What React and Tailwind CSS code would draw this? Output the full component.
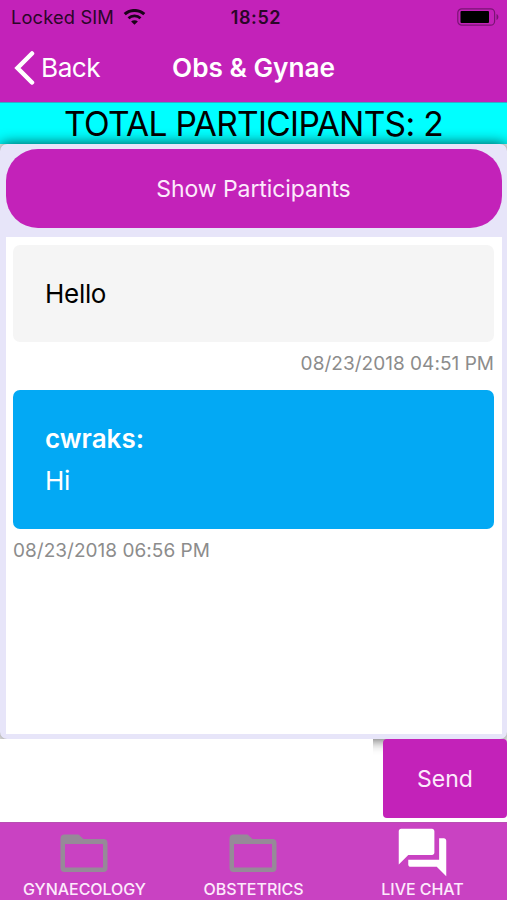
import { MdForum } from 'react-icons/md';

const messages = [
  { id: 1, text: 'Hello', time: '08/23/2018 04:51 PM', mine: true },
  { id: 2, author: 'cwraks', text: 'Hi', time: '08/23/2018 06:56 PM', mine: false },
];

const FolderIcon = () => (
  <svg width="48" height="39" viewBox="0 0 48 39" fill="none" className="mt-[11px] -ml-px">
    <path
      fillRule="evenodd"
      clipRule="evenodd"
      d="M4.5 0.5H18.5L23.5 5H43.5C46 5 47.5 6.5 47.5 9V34C47.5 36.5 46 38 43.5 38H4.5C2 38 0.5 36.5 0.5 34V4.5C0.5 2 2 0.5 4.5 0.5ZM5 10V33.5H43V10Z"
      fill="#968a98"
    />
  </svg>
);

const WifiIcon = () => (
  <svg width="23" height="16" viewBox="0 0 22 16" fill="none" stroke="#1a0319">
    <path d="M1.2 5.2C6.5 0.2 15.5 0.2 20.8 5.2" strokeWidth="3" />
    <path d="M5 9.2C8.3 6.2 13.7 6.2 17 9.2" strokeWidth="2.8" />
    <path d="M11 15.8L7.6 12.4C9.5 10.7 12.5 10.7 14.4 12.4Z" fill="#1a0319" stroke="none" />
  </svg>
);

const BatteryIcon = () => (
  <svg width="42" height="18" viewBox="0 0 42 18" fill="none">
    <rect x="0.8" y="0.8" width="36.8" height="16.4" rx="4" stroke="#7a1474" strokeWidth="1.2" />
    <rect x="3.5" y="3" width="28.5" height="12" rx="1" fill="#000" />
    <path d="M39.5 6C42 7 42 11 39.5 12Z" fill="#7a1474" />
  </svg>
);

function StatusBar() {
  return (
    <div className="grid h-[34px] grid-cols-3 items-center pl-[11px] pr-2 text-[18px] text-[#2b0628]">
      <div className="flex items-center gap-[9px] whitespace-nowrap">
        <span className="pt-[2px] text-[18.3px] tracking-[0.15px]">Locked SIM</span>
        <WifiIcon />
      </div>
      <div className="pl-[2px] text-center font-semibold tracking-[0.6px]">18:52</div>
      <div className="flex justify-end">
        <BatteryIcon />
      </div>
    </div>
  );
}

function NavBar() {
  return (
    <div className="grid h-[68px] grid-cols-[150px_1fr_150px] items-center text-[26.2px] text-white">
      <button className="flex items-center gap-[6px] pl-[14px]">
        <svg width="21" height="34" viewBox="0 0 21 34" fill="none" stroke="#fff" strokeWidth="4.5">
          <path d="M18 2.5L3.5 17L18 31.5" strokeLinecap="round" />
        </svg>
        <span className="tracking-[-0.5px]">Back</span>
      </button>
      <h1 className="text-center font-semibold">Obs &amp; Gynae</h1>
    </div>
  );
}

function Message({ author, text, time, mine }) {
  return (
    <div>
      <div
        className={`rounded-[7px] px-8 text-[26px] leading-[42px] ${
          mine ? 'bg-[#f5f5f5] pt-7 pb-[27px] text-black' : 'bg-[#03a9f4] py-[27.5px] text-white'
        }`}
      >
        {author && <p className="font-semibold">{author}:</p>}
        <p className="tracking-[-0.3px]">{text}</p>
      </div>
      <p className={`h-12 pt-[8px] text-[19px] leading-[28px] text-[#8c8c8c] tracking-[0.03px] ${mine ? 'text-right' : 'text-left'}`}>
        {time}
      </p>
    </div>
  );
}

function Tab({ label, children }) {
  return (
    <button className="flex flex-1 flex-col items-center text-[16px] text-[#fdeafc]">
      <div className="flex h-[56px] justify-center">{children}</div>
      <span className="font-medium leading-[20px] tracking-[-0.04px]">{label}</span>
    </button>
  );
}

export default function App() {
  return (
    <div className="flex h-[900px] w-[507px] flex-col overflow-hidden bg-white font-['Inter',sans-serif]">
      <header className="h-[102px] shrink-0 bg-[#c322b9]">
        <StatusBar />
        <NavBar />
      </header>

      <div className="h-[42px] shrink-0 border-t border-[#35a8c8] bg-[#00ffff] text-center text-[33.5px] leading-[43px] tracking-[-0.68px] text-black">
        TOTAL PARTICIPANTS: 2
      </div>

      <main className="relative flex h-[595px] shrink-0 flex-col rounded-[7px] bg-[#e7e5f9] px-[5.5px] pt-[5px] pb-[5px] shadow-[0_0_14px_rgba(0,0,0,0.75)]">
        <button className="h-[79px] w-full shrink-0 rounded-[32px] bg-[#c322b9] pt-[2px] text-[23px] tracking-[-0.08px] text-[#fdeafc]">
          Show Participants
        </button>
        <div className="mt-[9px] flex-1 bg-white px-[7.5px] pt-2">
          {messages.map((message) => (
            <Message key={message.id} {...message} />
          ))}
        </div>
      </main>

      <div className="relative flex h-[83px] shrink-0">
        <input className="w-[373px] bg-white outline-none" />
        <button className="ml-[10px] h-[79px] flex-1 rounded-[4px] bg-[#c322b9] pt-[2px] text-[23px] text-[#fdeafc]">
          Send
        </button>
      </div>

      <nav className="flex h-[78px] shrink-0 border-t border-[#b84fb2] bg-[#c942c2]">
        <Tab label="GYNAECOLOGY">
          <FolderIcon />
        </Tab>
        <Tab label="OBSTETRICS">
          <FolderIcon />
        </Tab>
        <Tab label="LIVE CHAT">
          <MdForum className="mt-[1px] size-[57px] text-white" />
        </Tab>
      </nav>
    </div>
  );
}
